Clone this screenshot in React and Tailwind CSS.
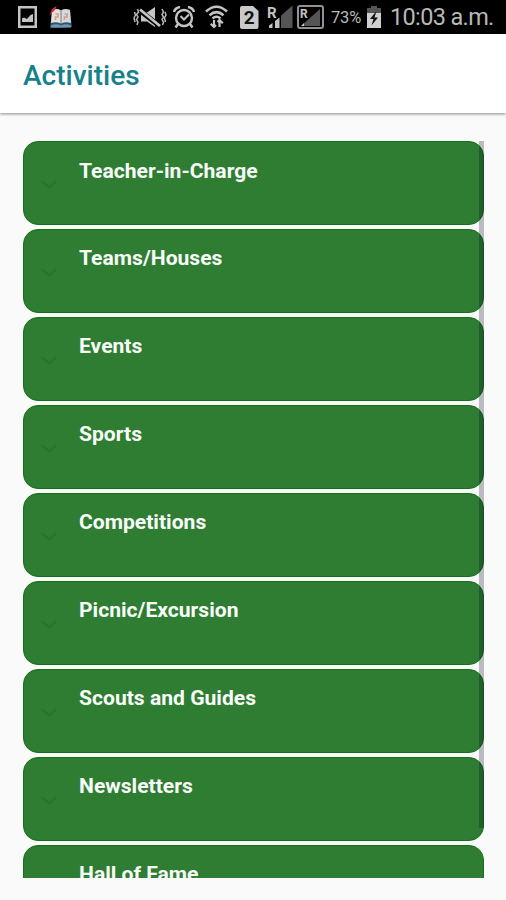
import React from "react";

const activities = [
    "Teacher-in-Charge",
    "Teams/Houses",
    "Events",
    "Sports",
    "Competitions",
    "Picnic/Excursion",
    "Scouts and Guides",
    "Newsletters",
    "Hall of Fame",
];

function PictureIcon() {
    return (
        <svg className="ml-[18px] shrink-0" width="19" height="22" viewBox="0 0 19 22">
            <rect x="1.25" y="1.25" width="16.5" height="19.5" fill="none" stroke="#c4c4c4" strokeWidth="2.5" />
            <path d="M4 16V12.500L6 11.500L9 13L12.500 9L15 8V16Z" fill="#c4c4c4" />
        </svg>
    );
}

function BookIcon() {
    return (
        <svg className="ml-3 shrink-0" width="24" height="24" viewBox="0 0 24 24">
            <path d="M1 22L3 6H21L23 22L13 23H1Z" fill="#2d5470" />
            <path d="M2 20.500Q7 18 12 20.500Q17 18 22 20.500V22.500H2Z" fill="#6f97b0" />
            <path d="M3 5Q8 3 12 5.500V18.500Q7 16.500 2 18Z" fill="#e3e1dc" />
            <path d="M12 5.500Q16 3 21 5L22 18Q17 16.500 12 18.500Z" fill="#d8d8d6" />
            <path d="M12 5.500V18.500" stroke="#75797c" />
            <path d="M6.500 9H9V12H6.500V15M15.500 9H18V12H15.500V15" fill="none" stroke="#c8a590" strokeWidth="1.700" />
            <path d="M0.500 10L3 4L8 0.500L6 5Z" fill="#d52a35" />
        </svg>
    );
}

function MuteIcon() {
    return (
        <svg className="ml-[60px] shrink-0" width="34" height="22" viewBox="0 0 34 22">
            <path d="M8 6.500H14L22 1V21L14 15.500H8Z" fill="#c4c4c4" />
            <path d="M6 4L28 21" stroke="#000" strokeWidth="5" />
            <path d="M7 3.500L27 20" stroke="#c4c4c4" strokeWidth="2.800" />
            <path d="M4.500 3L5.500 6L3.500 8.500L5 11L3.500 13.500L5 16L4 19M1.500 6L2.500 9L1 12L2 16M29 3L30.500 6L29 8.500L30.500 11L29 13.500L30.500 16L29.500 19M32 6L33 9L31.500 12L32.500 16" fill="none" stroke="#b5b5b5" strokeWidth="1.500" />
        </svg>
    );
}

function AlarmIcon() {
    return (
        <svg className="ml-[6px] shrink-0" width="22" height="23" viewBox="0 0 22 23">
            <circle cx="11" cy="12" r="8" fill="none" stroke="#c4c4c4" strokeWidth="2.400" />
            <path d="M1 6Q2 2 7 1M21 6Q20 2 15 1M5 18L2.500 21.500M17 18L19.500 21.500" fill="none" stroke="#c4c4c4" strokeWidth="2.500" />
            <path d="M7.500 10L11 13.500L16 8.500" fill="none" stroke="#c4c4c4" strokeWidth="2" />
        </svg>
    );
}

function WifiIcon() {
    return (
        <svg className="ml-[10px] shrink-0" width="23" height="24" viewBox="0 0 23 24">
            <path d="M1 6.500Q11.500 -3 22 6.500M4.500 10.200Q11.500 4 18.500 10.200M7.500 13.500Q11.500 10 15.500 13.500" fill="none" stroke="#c4c4c4" strokeWidth="2.500" />
            <path d="M9 15V22M5.700 18.700L9 22L11 20M14.500 22V15M12.500 17L14.500 15L17.800 18.300" fill="none" stroke="#c4c4c4" strokeWidth="2.200" />
        </svg>
    );
}

function SimIcon() {
    return (
        <svg className="ml-3 shrink-0" width="19" height="23" viewBox="0 0 19 23">
            <path d="M2 0H13L18.500 5V21Q18.500 23 16.500 23H2Q0 23 0 21V2Q0 0 2 0Z" fill="#c9c9c9" />
            <text x="9.200" y="18" textAnchor="middle" fontFamily="Roboto, sans-serif" fontSize="19" fontWeight="700" fill="#111">2</text>
        </svg>
    );
}

function SignalIcon() {
    return (
        <svg className="ml-2 shrink-0 overflow-visible" width="26" height="24" viewBox="0 0 26 24">
            <path d="M14 10.500L25.500 0.500V23H14Z" fill="#555" />
            <path d="M2 20.500L5.500 18V23H2ZM8 16L12.500 12.500V23H8Z" fill="#c4c4c4" />
            <text x="0" y="12.500" fontFamily="Roboto, sans-serif" fontSize="15" fontWeight="700" fill="#c4c4c4">R</text>
        </svg>
    );
}

function RoamingIcon() {
    return (
        <svg className="ml-1 shrink-0" width="27" height="24" viewBox="0 0 27 24">
            <rect x="1" y="1" width="25" height="22" rx="2" fill="none" stroke="#929292" strokeWidth="2" />
            <path d="M4 21L23 4V21Z" fill="#555" />
            <path d="M4 21L7 18V21Z" fill="#c4c4c4" />
            <text x="3" y="12.500" fontFamily="Roboto, sans-serif" fontSize="12" fontWeight="700" fill="#c4c4c4">R</text>
        </svg>
    );
}

function BatteryIcon() {
    return (
        <svg className="shrink-0" width="14" height="22" viewBox="0 0 14 22">
            <path d="M4 0H10V2H14V7H0V2H4Z" fill="#555" />
            <path d="M0 7H14V22H0Z" fill="#d0d0d0" />
            <path d="M9.500 5L3 13H6.500L4.500 19.500L11 11.500H7.500Z" fill="#111" />
        </svg>
    );
}

function StatusBar() {
    return (
        <div className="flex h-[34px] items-center overflow-hidden bg-black text-[#b8b8b8]">
            <PictureIcon />
            <BookIcon />
            <MuteIcon />
            <AlarmIcon />
            <WifiIcon />
            <SimIcon />
            <SignalIcon />
            <RoamingIcon />
            <span className="ml-[7px] w-[36px] pt-[2px] text-[16.5px] leading-none tracking-[-0.2px]">73%</span>
            <BatteryIcon />
            <span className="ml-[9px] whitespace-nowrap pt-px text-[23.5px] leading-none tracking-[-0.65px]">10:03 a.m.</span>
        </div>
    );
}

function ActivityCard({ title }) {
    return (
        <li className="flex h-[84px] shrink-0 rounded-[15px] border border-[#12721a] bg-[#2f7d32]">
            <svg className="ml-[17px] mt-[38px] shrink-0" width="16" height="9" viewBox="0 0 16 9">
                <path d="M0.500 1L8 7.500L15.500 1" fill="none" stroke="#2a7230" strokeWidth="1.700" />
            </svg>
            <span className="ml-[22px] mt-[15.5px] text-[21.1px] font-bold leading-[26px] text-[#f8fcf8]">{title}</span>
        </li>
    );
}

function App() {
    return (
        <div className="flex h-[900px] w-[506px] flex-col overflow-hidden bg-[#fafafa] font-[Roboto,sans-serif]">
            <StatusBar />
            <header className="flex h-[79px] shrink-0 items-center bg-white px-[23px] pt-[5px] shadow-[0_1px_3px_rgba(0,0,0,0.45)]">
                <h1 className="text-[28px] font-medium leading-none text-[#16808c]">Activities</h1>
            </header>

            <main className="relative mx-[23px] mt-[28px] h-[737px] w-[461px] shrink-0 overflow-hidden">
                <ul className="flex flex-col gap-[3.95px]">
                    {activities.map((title) => (
                        <ActivityCard key={title} title={title} />
                    ))}
                </ul>

                {/* scroll indicator */}
                <div className="absolute right-0 top-0 h-[687px] w-[5px] bg-[#00001e]/25" />
            </main>
        </div>
    );
}

export default App;
